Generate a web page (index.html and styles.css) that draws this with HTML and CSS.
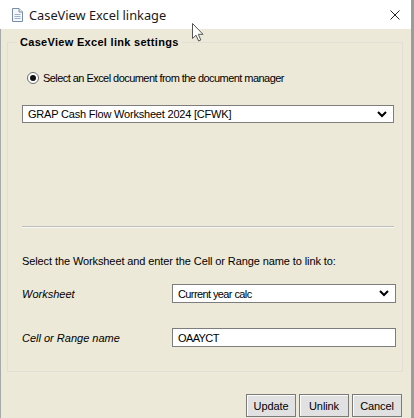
FILE: index.html
```html
<!DOCTYPE html>
<html lang="en">
<head>
<meta charset="utf-8">
<title>CaseView Excel linkage</title>
<link rel="stylesheet" href="styles.css">
</head>
<body>
<div class="window">
  <div class="titlebar">
    <svg class="app-icon" viewBox="0 0 11 14" aria-hidden="true">
      <path d="M0.5 0.5 H7 L10.5 4 V13.5 H0.5 Z" fill="#f4f8fc" stroke="#7c8ea6" stroke-width="1"/>
      <path d="M7 0.5 V4 H10.5" fill="#dfe7f1" stroke="#7c8ea6" stroke-width="1"/>
      <path d="M2.5 6.5 H8.5 M2.5 8.5 H8.5 M2.5 10.5 H8.5" stroke="#9fb3cc" stroke-width="1"/>
    </svg>
    <span class="title">CaseView Excel linkage</span>
    <svg class="close" viewBox="0 0 10 10" aria-hidden="true">
      <path d="M0.5 0.5 L9.5 9.5 M9.5 0.5 L0.5 9.5" stroke="#222" stroke-width="1"/>
    </svg>
  </div>
  <div class="content">
    <fieldset class="group">
      <legend>CaseView Excel link settings</legend>
      <div class="radio-row">
        <span class="radio"><span class="dot"></span></span>
        <span class="radio-label">Select an Excel document from the document manager</span>
      </div>
      <div class="combo wide">
        <span>GRAP Cash Flow Worksheet 2024 [CFWK]</span>
        <svg class="chev" viewBox="0 0 10 7" aria-hidden="true"><path d="M1 1 L5 5 L9 1" fill="none" stroke="#000" stroke-width="2"/></svg>
      </div>
      <div class="separator"></div>
      <p class="instr">Select the Worksheet and enter the Cell or Range name to link to:</p>
      <div class="field-row worksheet-row">
        <span class="label">Worksheet</span>
        <div class="combo field tight">
          <span>Current year calc</span>
          <svg class="chev" viewBox="0 0 10 7" aria-hidden="true"><path d="M1 1 L5 5 L9 1" fill="none" stroke="#000" stroke-width="2"/></svg>
        </div>
      </div>
      <div class="field-row cell-row">
        <span class="label">Cell or Range name</span>
        <div class="input field tight">OAAYCT</div>
      </div>
    </fieldset>
    <div class="buttons">
      <button type="button">Update</button>
      <button type="button">Unlink</button>
      <button type="button">Cancel</button>
    </div>
  </div>
  <svg class="cursor" viewBox="0 0 12 19" aria-hidden="true">
    <path d="M0.5 0.5 L0.5 15.5 L4 12.2 L6.6 18 L8.8 17 L6.3 11.3 L11 11.3 Z" fill="#fff" stroke="#555" stroke-width="1" stroke-linejoin="round"/>
  </svg>
</div>
</body>
</html>
```

FILE: styles.css
```css
html, body {
  margin: 0;
  padding: 0;
  background: #ece9d8;
}

.window {
  width: 414px;
  height: 418px;
  box-sizing: border-box;
  display: flex;
  flex-direction: column;
  overflow: hidden;
  position: relative;
  border-right: 3px solid #9c9c9c;
  font-family: "Liberation Sans", Arial, sans-serif;
  font-size: 11px;
  color: #000;
}

.titlebar {
  flex: none;
  height: 29px;
  background: #fff;
  display: flex;
  align-items: center;
  padding-left: 12px;
}

.app-icon {
  width: 11px;
  height: 14px;
  margin-right: 6px;
}

.title {
  font-family: "Noto Sans", "Liberation Sans", sans-serif;
  font-size: 12.8px;
  color: #1a1a1a;
}

.close {
  width: 10px;
  height: 10px;
  margin-left: auto;
  margin-right: 11px;
}

.content {
  flex: 1;
  background: #ece9d8;
  border-left: 1px solid #a8a8a8;
  padding: 0 8px 0 6px;
  display: flex;
  flex-direction: column;
}

.group {
  margin: 6px 0 0 0;
  padding: 0 0 24px 0;
  border: 1px solid #e2e0d6;
  min-width: 0;
}

.group legend {
  margin-left: 9px;
  padding: 0 3px;
  font-weight: bold;
  font-size: 11px;
  letter-spacing: 0.3px;
  line-height: 14px;
}

.radio-row {
  display: flex;
  align-items: center;
  height: 16px;
  margin: 21px 0 0 19px;
}

.radio-label {
  letter-spacing: -0.55px;
}

.radio {
  width: 12px;
  height: 12px;
  box-sizing: border-box;
  border: 1px solid #6f6f6f;
  border-radius: 50%;
  background: #fff;
  display: flex;
  align-items: center;
  justify-content: center;
  margin-right: 4px;
}

.dot {
  width: 6px;
  height: 6px;
  border-radius: 50%;
  background: #111;
}

.combo {
  display: flex;
  align-items: center;
  justify-content: space-between;
  background: #fff;
  border: 1px solid #7d7d7d;
  box-sizing: border-box;
  padding: 0 6px 0 5px;
  letter-spacing: -0.2px;
}

.combo.wide {
  height: 18px;
  width: 372px;
  margin: 19px 0 0 14px;
}

.chev {
  width: 10px;
  height: 7px;
}

.separator {
  width: 372px;
  margin: 103px 0 0 14px;
  border-top: 1px solid #bdbdbd;
  border-bottom: 1px solid #f8f8f4;
}

.instr {
  margin: 26px 0 0 14px;
  line-height: 14px;
  letter-spacing: -0.1px;
}

.field-row {
  display: flex;
  align-items: center;
  margin-left: 14px;
}

.worksheet-row {
  margin-top: 16px;
}

.cell-row {
  margin-top: 25px;
}

.label {
  width: 150px;
  font-style: italic;
}

.field {
  width: 224px;
  height: 19px;
}

.tight {
  letter-spacing: -0.6px;
}

.input {
  background: #fff;
  border: 1px solid #7d7d7d;
  box-sizing: border-box;
  padding-left: 5px;
  display: flex;
  align-items: center;
}

.buttons {
  display: flex;
  justify-content: flex-end;
  gap: 3px;
  margin-top: 22px;
  padding-right: 1px;
}

.buttons button {
  width: 50px;
  height: 23px;
  padding: 0;
  font-family: "Liberation Sans", Arial, sans-serif;
  font-size: 11px;
  letter-spacing: -0.1px;
  color: #000;
  background: #e1e1e1;
  border: 1px solid #7a7a7a;
  box-shadow: inset 1px 1px 0 #fbfbfb;
}

.cursor {
  position: absolute;
  left: 192px;
  top: 23px;
  width: 12px;
  height: 19px;
}
```
